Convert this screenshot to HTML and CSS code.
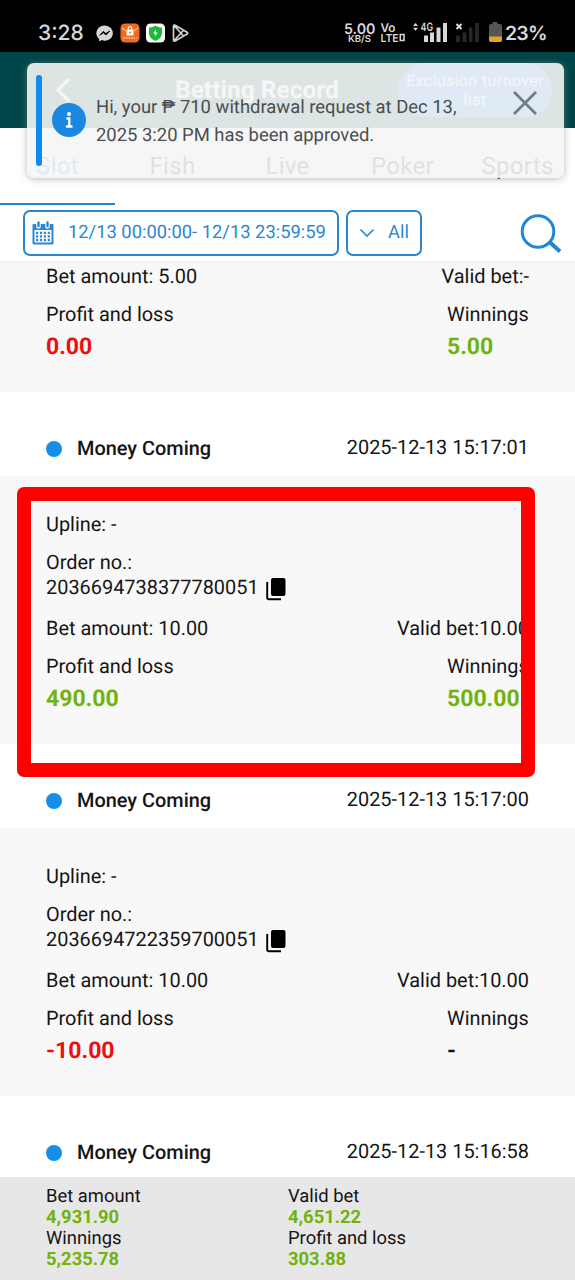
FILE: index.html
```html
<!DOCTYPE html>
<html lang="en">
<head>
<meta charset="utf-8">
<title>Betting Record</title>
<link rel="stylesheet" href="styles.css">
</head>
<body>
<div class="screen">
  <div class="status">
    <span class="clock">3:28</span>
    <svg class="apps" width="96" height="24" viewBox="0 0 96 24">
      <path d="M9.500 4.500a8.200 7.600 0 0 0-8.200 7.600c0 2.500 1.200 4.500 2.800 5.800v2.500l2.500-1.300a8.200 7.600 0 1 0 2.900-14.600z" fill="#d6d6d8"/>
      <path d="M4.700 14.200l3.600-3.800 2.600 2.200 3.700-2.500-3.500 3.900-2.700-2.200z" fill="#050505" stroke="#050505"/>
      <rect x="25.500" y="2.500" width="19" height="19" rx="4.500" fill="#f06a22"/>
      <path d="M27 7l4 3M43 7l-4 3" stroke="#ffae6b" stroke-width="1.500"/>
      <path d="M31.500 8.500h7v6h-7z" fill="#fff"/><path d="M33.200 8.500v-1a1.800 1.800 0 0 1 3.600 0v1" fill="none" stroke="#fff" stroke-width="1.200"/>
      <circle cx="35" cy="11.500" r="1" fill="#f06a22"/>
      <path d="M28.500 17h13" stroke="#ffd2ae" stroke-width="1.500" stroke-dasharray="1.500 1"/>
      <rect x="51" y="2.500" width="19" height="19" rx="4.500" fill="#fff"/>
      <path d="M60.500 4.500c2 1.500 4 2 6.500 2v5c0 4-2.500 7-6.500 8.500-4-1.500-6.500-4.500-6.500-8.500v-5c2.500 0 4.500-.5 6.500-2z" fill="#1fb83c"/>
      <path d="M61.100 8.500l-2.900 4h2l-.5 3 3.100-4h-2z" fill="#fff"/>
      <path d="M78.500 5c0-1 .8-1.200 1.600-.8l12 7c.9.500.9 1.200 0 1.700l-12 7c-.8.500-1.600.1-1.600-.8zM79 4.500l9.500 10.500M79 19.800l9.500-10.500" fill="none" stroke="#d0d0d0" stroke-width="1.700" stroke-linejoin="round"/>
    </svg>
    <svg class="signals" width="162" height="28" viewBox="0 0 162 28">
      <g fill="#d8d8d8" font-family="Inter, sans-serif" font-weight="600">
        <text x="0" y="14.500" font-size="14.500" textLength="31.500" lengthAdjust="spacingAndGlyphs">5.00</text>
        <text x="4" y="22.500" font-size="9.500" textLength="23" lengthAdjust="spacingAndGlyphs">KB/S</text>
        <text x="36.500" y="12.500" font-size="12" textLength="15" lengthAdjust="spacingAndGlyphs">Vo</text>
        <text x="36.500" y="22.500" font-size="11" textLength="18" lengthAdjust="spacingAndGlyphs">LTE</text>
        <text x="76.500" y="12" font-size="11.500" textLength="12.500" lengthAdjust="spacingAndGlyphs">4G</text>
      </g>
      <path d="M56.300 15.500h3.700v6h-3.700z" fill="none" stroke="#d8d8d8" stroke-width="1.600"/>
      <path d="M69 7l2.500-3 2.500 3zM69 8.800l2.500 3 2.500-3z" fill="#d8d8d8"/>
      <path d="M80 16.500h4v6.500h-4zM86 13.500h4v9.500h-4zM92.500 8.500h4v14.500h-4zM99 4h4v19h-4z" fill="#d8d8d8"/>
      <path d="M112.500 5l5 5m0-5l-5 5" stroke="#e0e0e0" stroke-width="1.800"/>
      <path d="M112 16.500h4v6.500h-4zM118.500 13.500h4v9.500h-4zM125 8.500h3.500v14.500h-3.500zM131 4h4v19h-4z" fill="#262626"/>
      <path d="M148.500 3h5v2h2.500q2 0 2 2v14q0 2-2 2h-9q-2 0-2-2v-14q0-2 2-2h1.500z" fill="#555"/>
      <path d="M145 17.500h13v3.500q0 2-2 2h-9q-2 0-2-2z" fill="#e3a51d"/>
    </svg>
    <span class="battery">23%</span>
  </div>

  <header class="header">
    <svg class="back" width="18" height="28" viewBox="0 0 18 28"><path d="M16 3L5 14l11 11" fill="none" stroke="#fff" stroke-width="3"/></svg>
    <h1 class="title">Betting Record</h1>
    <div class="pill">Exclusion turnover<br>list</div>
  </header>

  <nav class="tabs">
    <span class="tab active">Slot</span><span class="tab">Fish</span><span class="tab">Live</span><span class="tab">Poker</span><span class="tab">Sports</span>
  </nav>

  <div class="filters">
    <div class="box dates">
      <svg width="22" height="24" viewBox="0 0 22 24">
        <path d="M1.500 3h19q1 0 1 1v18q0 1.500-1.500 1.500h-18q-1.500 0-1.500-1.500v-18q0-1 1-1z" fill="#2b88d0"/>
        <path d="M2.500 9h17v12.500h-17z" fill="#fff"/>
        <path d="M4 11.800h14M4 15.400h14M4 19h14" stroke="#2b88d0" stroke-width="2.300" stroke-dasharray="2.200 1.700"/>
        <path d="M6.500 1.500v4M15.500 1.500v4" stroke="#fff" stroke-width="4.500" stroke-linecap="round"/>
        <path d="M6.500 1.500v3.500M15.500 1.500v3.500" stroke="#2b88d0" stroke-width="2.400" stroke-linecap="round"/>
      </svg>
      <span>12/13 00:00:00- 12/13 23:59:59</span>
    </div>
    <div class="box kind">
      <svg width="16" height="10" viewBox="0 0 16 10"><path d="M1.500 1.500L8 8l6.500-6.500" fill="none" stroke="#2b88d0" stroke-width="1.700"/></svg>
      <span>All</span>
    </div>
    <svg class="search" width="42" height="40" viewBox="0 0 42 40"><circle cx="18" cy="17.500" r="15.800" fill="none" stroke="#1f88d6" stroke-width="3"/><path d="M29.500 28l10.500 9.500" stroke="#1f88d6" stroke-width="4"/></svg>
  </div>

  <main class="list">
    <section class="body partial">
      <div class="row"><span>Bet amount: 5.00</span><span>Valid bet:-</span></div>
      <div class="row"><span>Profit and loss</span><span class="col">Winnings</span></div>
      <div class="row amounts"><b class="red">0.00</b><b class="col green">5.00</b></div>
    </section>

    <div class="head"><i class="dot"></i><span class="name">Money Coming</span><time>2025-12-13 15:17:01</time></div>
    <section class="body">
      <div class="row">Upline: -</div>
      <div class="order"><span>Order no.:</span><div class="number">2036694738377780051
        <svg width="20" height="24" viewBox="0 0 20 24"><rect x="5" y="1" width="14.500" height="18" rx="2" fill="#000"/><path d="M1.200 5v15.500q0 1.800 1.800 1.800h12" fill="none" stroke="#000" stroke-width="1.900"/></svg></div></div>
      <div class="row"><span>Bet amount: 10.00</span><span>Valid bet:10.00</span></div>
      <div class="row"><span>Profit and loss</span><span class="col">Winnings</span></div>
      <div class="row amounts"><b class="green">490.00</b><b class="col green">500.00</b></div>
      <div class="marker"></div>
    </section>

    <div class="head"><i class="dot"></i><span class="name">Money Coming</span><time>2025-12-13 15:17:00</time></div>
    <section class="body">
      <div class="row">Upline: -</div>
      <div class="order"><span>Order no.:</span><div class="number">2036694722359700051
        <svg width="20" height="24" viewBox="0 0 20 24"><rect x="5" y="1" width="14.500" height="18" rx="2" fill="#000"/><path d="M1.200 5v15.500q0 1.800 1.800 1.800h12" fill="none" stroke="#000" stroke-width="1.900"/></svg></div></div>
      <div class="row"><span>Bet amount: 10.00</span><span>Valid bet:10.00</span></div>
      <div class="row"><span>Profit and loss</span><span class="col">Winnings</span></div>
      <div class="row amounts"><b class="red">-10.00</b><b class="col">-</b></div>
    </section>

    <div class="head"><i class="dot"></i><span class="name">Money Coming</span><time>2025-12-13 15:16:58</time></div>
  </main>

  <footer class="totals">
    <div>Bet amount<b>4,931.90</b>Winnings<b>5,235.78</b></div>
    <div>Valid bet<b>4,651.22</b>Profit and loss<b>303.88</b></div>
  </footer>

  <div class="toast">
    <div class="accent"></div>
    <svg class="info" width="34" height="34" viewBox="0 0 34 34"><circle cx="17" cy="17" r="17" fill="#1a88e0"/><circle cx="17" cy="11" r="2" fill="#fff"/><path d="M14.500 15.500h2.800v8M14 23.500h6.500" fill="none" stroke="#fff" stroke-width="2.300"/></svg>
    <p class="message">Hi, your ₱ 710 withdrawal request at Dec 13,<br>2025 3:20 PM has been approved.</p>
    <svg class="close" width="26" height="26" viewBox="0 0 26 26"><path d="M2 2l22 22M24 2L2 24" stroke="#6f7c80" stroke-width="2.700"/></svg>
  </div>
</div>
</body>
</html>
```

FILE: styles.css
```css
* { box-sizing: border-box; }
body { margin: 0; background: #fff; font-family: Roboto, sans-serif; color: #151515; text-rendering: geometricPrecision; }
.screen { position: relative; width: 575px; height: 1280px; overflow: hidden; display: flex; flex-direction: column; font-size: 19.920px; }

.status { height: 52px; flex: none; background: #000; color: #d8d8d8; display: flex; align-items: center; padding: 14px 0 0 38px; font-family: Inter, sans-serif; font-weight: 500; font-size: 21px; }
.clock { width: 57px; }
.signals { margin-left: 153px; flex: none; }
.battery { font-size: 19.500px; font-weight: 600; letter-spacing: -0.8px; margin-left: -1px; }

.header { height: 76px; flex: none; background: #004549; display: flex; align-items: center; padding-left: 53px; color: #fff; }
.title { margin: 0 0 0 104px; width: 223px; font-size: 24.500px; font-weight: 700; line-height: 28px; white-space: nowrap; }
.pill { width: 154px; height: 54px; border-radius: 27px; background: #1989e6; display: flex; align-items: center; justify-content: center; text-align: center; font-size: 16px; line-height: 19px; letter-spacing: .4px; white-space: nowrap; }

.tabs { height: 77px; flex: none; display: flex; }
.tab { width: 115px; flex: none; text-align: center; line-height: 76px; font-size: 24px; letter-spacing: .3px; color: #222; }
.active { color: #1989e6; border-bottom: 2.500px solid #1f82cf; }

.filters { height: 58px; flex: none; display: flex; align-items: flex-start; padding: 5px 13px 0 23px; border-bottom: 2px solid #f2f2f2; color: #2b88d0; }
.box { height: 46px; border: 2px solid #2b88d0; border-radius: 7px; display: flex; align-items: center; white-space: nowrap; font-size: 18.350px; }
.box span { margin-top: -1px; }
.dates { width: 316px; padding-left: 7px; gap: 14px; margin-right: 7px; }
.kind { width: 76px; padding-left: 11px; gap: 13px; }
.search { margin: 4px 0 0 auto; }

.list { height: 914px; flex: none; overflow: hidden; }
.head { height: 84px; padding: 44px 46px 0; display: flex; line-height: 24px; }
.dot { width: 16px; height: 16px; border-radius: 50%; background: #158eea; margin: 5px 15px 0 0; }
.name { font-weight: 500; padding-top: 1px; }
time { margin-left: auto; }
.body { position: relative; height: 268px; background: #f8f8f8; padding: 37px 46px 0; line-height: 24px; }
.row { display: flex; justify-content: space-between; height: 24px; margin-bottom: 14px; white-space: nowrap; }
.order { margin-bottom: 16px; }
.order > span { display: block; height: 24px; }
.number { display: flex; align-items: center; gap: 7px; height: 26px; line-height: 26px; }
.number svg { margin-top: 1px; }
.body .row:has(+ .amounts) { margin-bottom: 8px; }
.col { width: 82px; }
.row b { font-size: 23px; font-weight: 700; }
.partial { height: 129px; padding-top: 2px; }
.green { color: #72b20c; }
.red { color: #f20d0d; }
.marker { position: absolute; left: 17px; top: 10.500px; width: 518px; height: 290.500px; border: 14px solid #f00; border-radius: 7px; z-index: 1; }

.totals { height: 103px; flex: none; background: #e7e7e7; display: grid; grid-template-columns: 242px 1fr; padding: 9px 0 0 46px; font-size: 18.400px; line-height: 21px; }
.totals b { display: block; color: #72b20c; font-size: 18.400px; }

.toast { position: absolute; left: 27px; top: 63px; width: 537px; height: 115px; border-radius: 7px; background: rgba(245,245,245,.9); box-shadow: 0 1px 7px rgba(130,140,140,.6); display: flex; padding: 12px 26px 0 9px; }
.accent { width: 6px; height: 91px; border-radius: 3px; background: #0d8cee; }
.info { margin: 28px 0 0 10px; flex: none; }
.message { margin: 19px 0 0 10px; font-size: 18.430px; line-height: 28px; color: #4a4e50; white-space: nowrap; }
.close { margin: 15px 0 0 auto; }
```
